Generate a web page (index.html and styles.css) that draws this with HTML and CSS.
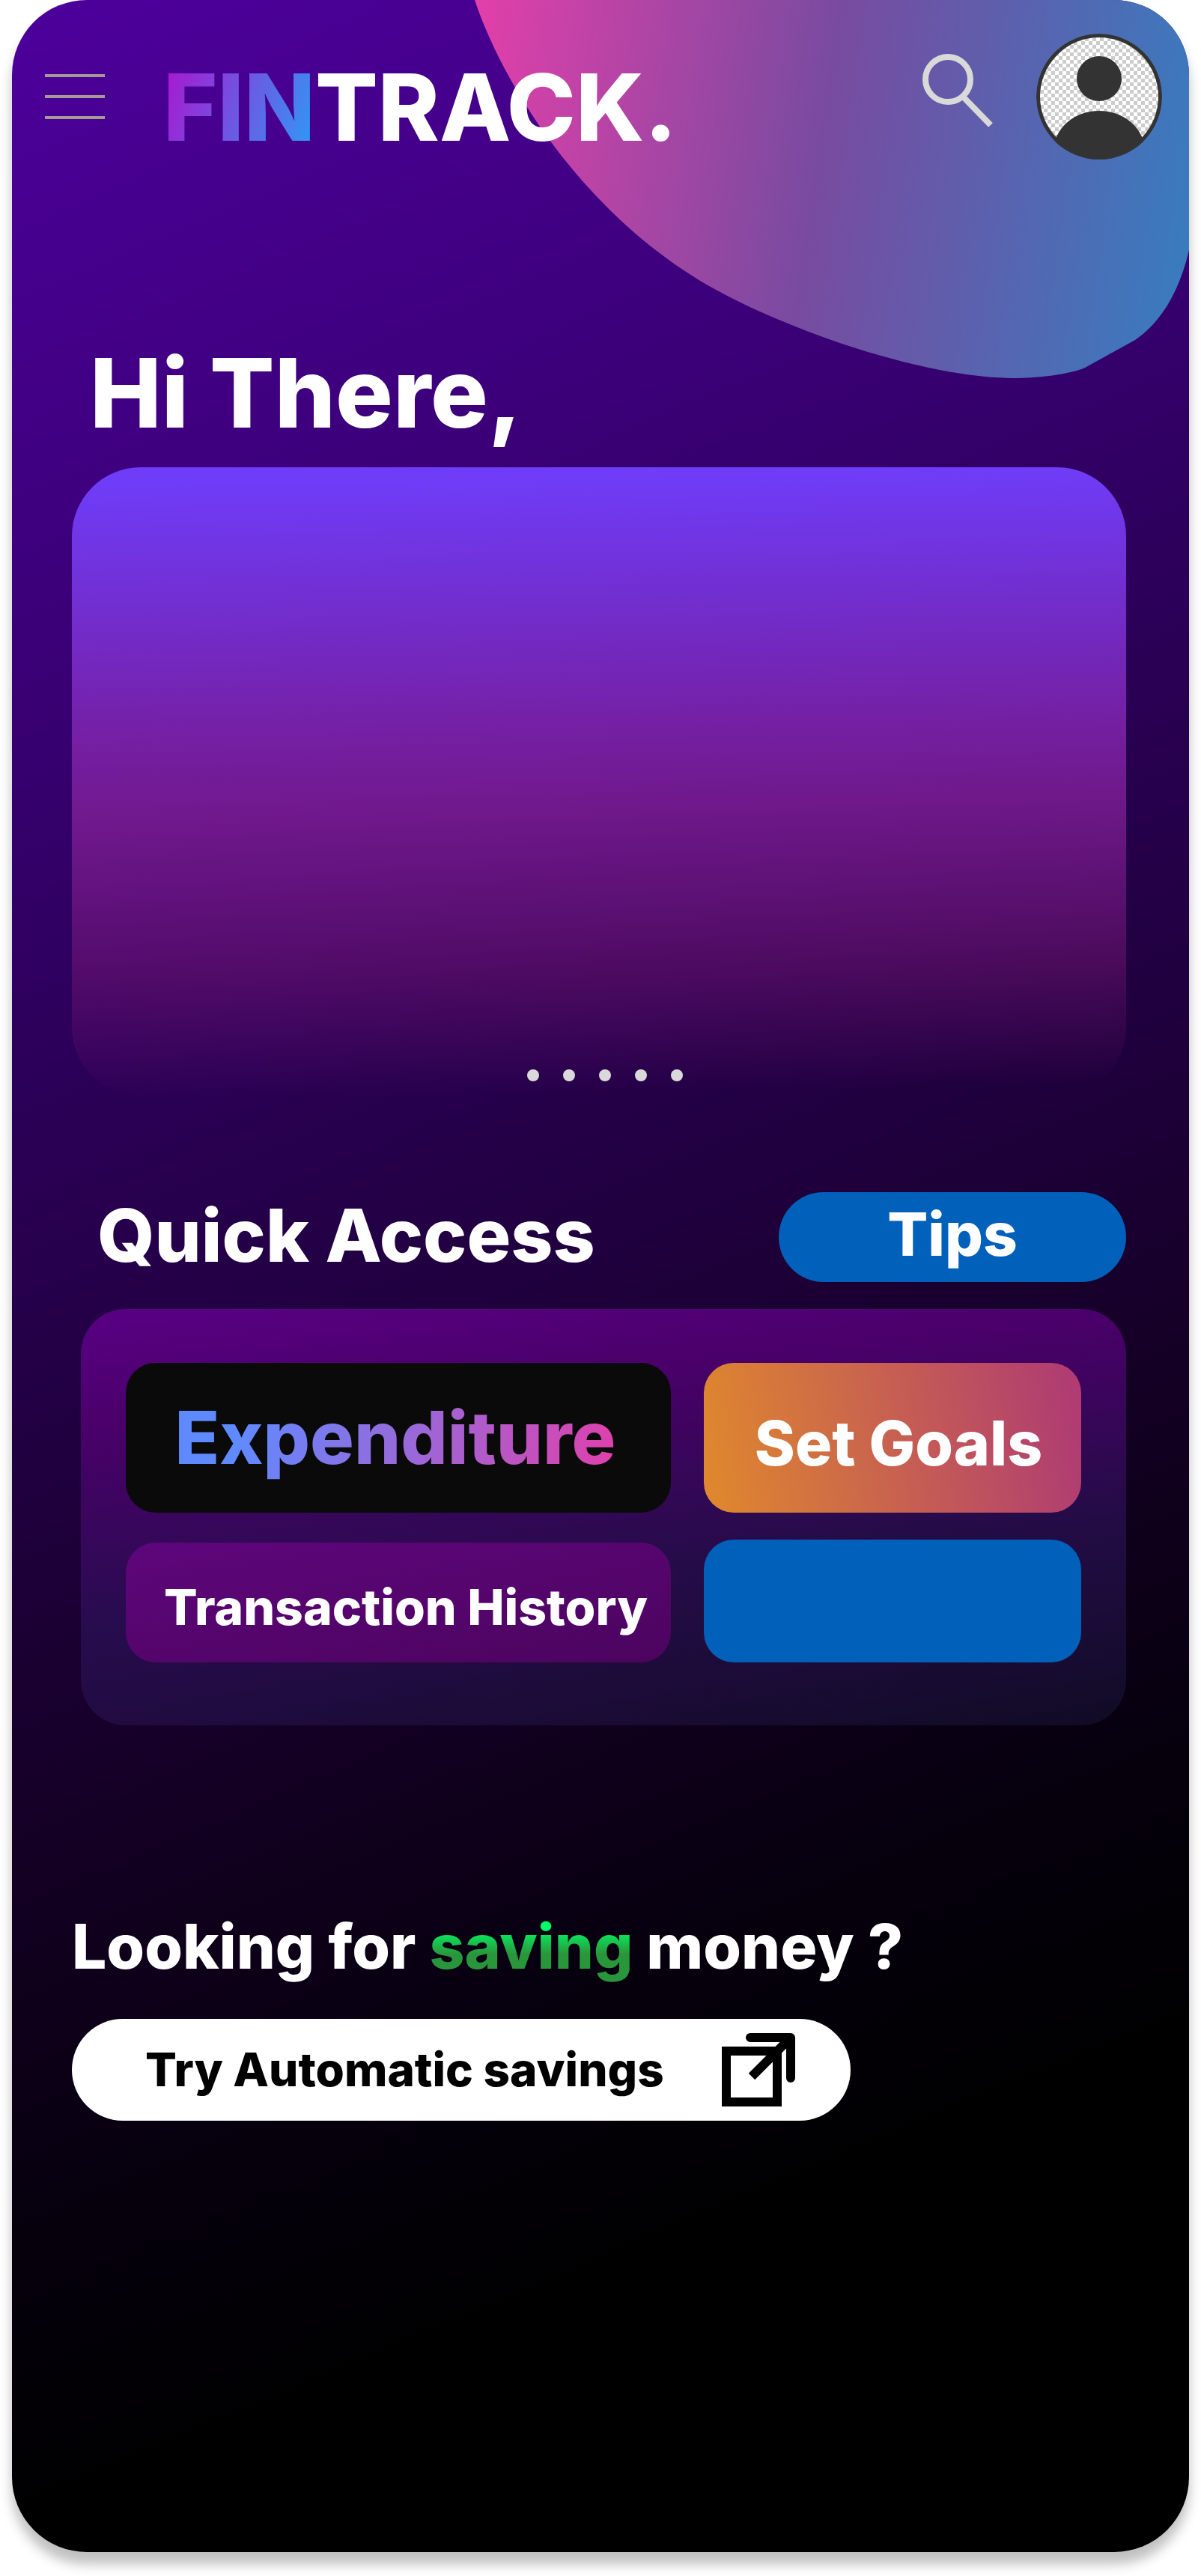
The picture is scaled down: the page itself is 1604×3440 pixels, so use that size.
FILE: index.html
```html
<!DOCTYPE html>
<html lang="en">
<head>
<meta charset="utf-8">
<meta name="viewport" content="width=device-width, initial-scale=1">
<title>Fintrack</title>
<link rel="stylesheet" href="styles.css">
</head>
<body>
<div class="screen">
  <svg class="blob" viewBox="634 0 954 510" aria-hidden="true">
    <defs>
      <linearGradient id="blob-fill" gradientUnits="userSpaceOnUse" x1="490" y1="71" x2="1715" y2="247">
        <stop offset="0" stop-color="#ff3cac"/>
        <stop offset=".5" stop-color="#784ba0"/>
        <stop offset="1" stop-color="#2b86c5"/>
      </linearGradient>
    </defs>
    <path fill="url(#blob-fill)" d="M634 0C672 115 785 295 960 389C1065 446 1240 505 1354 505C1385 505 1428 500 1449 491L1516 454C1552 430 1576 386 1588 334V0Z"/>
  </svg>

  <header class="header">
    <button class="menu" type="button" aria-label="Menu">
      <span class="menu-line"></span>
      <span class="menu-line"></span>
      <span class="menu-line"></span>
    </button>
    <h1 class="logo"><span class="logo-fin">FIN</span>TRACK.</h1>
    <button class="search" type="button" aria-label="Search">
      <svg width="94" height="98" viewBox="0 0 94 98" fill="none" stroke="#d9d9d9" stroke-width="8" aria-hidden="true">
        <circle cx="34" cy="34" r="30"/>
        <path d="M54 57L91 95"/>
      </svg>
    </button>
    <button class="avatar" type="button" aria-label="Profile">
      <svg width="168" height="168" viewBox="0 0 168 168" aria-hidden="true">
        <defs>
          <pattern id="checker" width="10" height="10" patternUnits="userSpaceOnUse">
            <path fill="#fff" d="M0 0h10v10H0z"/>
            <path fill="#ccc" d="M0 0h5v5H0zM5 5h5v5H5z"/>
          </pattern>
          <clipPath id="avatar-clip"><circle cx="84" cy="84" r="84"/></clipPath>
        </defs>
        <g clip-path="url(#avatar-clip)">
          <circle cx="84" cy="84" r="82" fill="url(#checker)"/>
          <circle cx="84" cy="60" r="30" fill="#333"/>
          <ellipse cx="84" cy="157" rx="61" ry="54" fill="#333"/>
          <circle cx="84" cy="84" r="81.500" fill="none" stroke="#333" stroke-width="5"/>
        </g>
      </svg>
    </button>
  </header>

  <main class="main">
    <h2 class="greeting">Hi There,</h2>

    <section class="hero" aria-label="Highlights">
      <span class="dot"></span>
      <span class="dot"></span>
      <span class="dot"></span>
      <span class="dot"></span>
      <span class="dot"></span>
    </section>

    <div class="quick-head">
      <h2 class="quick-title">Quick Access</h2>
      <button class="tips" type="button">Tips</button>
    </div>

    <section class="panel" aria-label="Quick Access">
      <button class="tile tile-expenditure" type="button"><span class="expenditure-text">Expenditure</span></button>
      <button class="tile tile-goals" type="button">Set Goals</button>
      <button class="tile tile-history" type="button">Transaction History</button>
      <button class="tile tile-blank" type="button" aria-label="More"></button>
    </section>

    <h2 class="saving-title">Looking for <span class="saving-word">saving</span> money ?</h2>
    <button class="auto" type="button">
      Try Automatic savings
      <svg width="98" height="98" viewBox="0 0 98 98" fill="none" stroke="#000" stroke-width="12" aria-hidden="true">
        <path d="M6 24H74V92H6Z"/>
        <path d="M40 58L92 6"/>
        <path d="M38 6H92V60" stroke-linecap="round" stroke-linejoin="round"/>
      </svg>
    </button>
  </main>
</div>
</body>
</html>
```
FILE: styles.css
```css
* {
  box-sizing: border-box;
}

body {
  margin: 0;
  padding: 0 16px 32px;
  background: #fff;
  color: #fff;
  font-family: Inter, "Open Sans", sans-serif;
  font-weight: 800;
}

h1,
h2 {
  margin: 0;
  font-weight: 800;
}

button {
  margin: 0;
  padding: 0;
  border: 0;
  background: none;
  color: inherit;
  font: inherit;
  cursor: pointer;
}

svg {
  display: block;
}

.screen {
  position: relative;
  overflow: hidden;
  border-radius: 100px;
  background: linear-gradient(157deg, #4d009c 0%, #3c007a 20%, #2e005e 33%, #1f003c 50%, #130022 62%, #05000c 74%, #000 83%);
  box-shadow: 0 16px 16px rgba(0, 0, 0, 0.25);
}

/* Decorative shape behind the header */
.blob {
  position: absolute;
  top: 0;
  right: 0;
  width: 954px;
  height: 510px;
}

.header {
  position: relative;
  display: flex;
  align-items: center;
  padding: 45px 36px 0 44px;
}

.menu {
  display: grid;
  gap: 24px;
  width: 80px;
}

.menu-line {
  height: 4px;
  background: #a59a98;
}

.logo {
  margin-left: 78px;
  padding-top: 28px;
  font-size: 124px;
  line-height: 124px;
}

.logo-fin {
  background: linear-gradient(110deg, #a818d0 5%, #3198f5 95%);
  background-clip: text;
  color: transparent;
}

.search {
  margin-left: auto;
  padding-bottom: 16px;
}

.avatar {
  margin-left: 58px;
  border-radius: 50%;
}

.main {
  position: relative;
  padding: 250px 84px 576px 80px;
}

.greeting {
  padding-left: 24px;
  font-size: 128px;
  line-height: 124px;
}

.hero {
  display: flex;
  justify-content: center;
  align-items: flex-end;
  gap: 32px;
  height: 840px;
  margin-top: 37px;
  padding: 0 0 20px 16px;
  border-radius: 92px;
  background: linear-gradient(179deg, #6f3cf7 3%, rgba(124, 34, 168, 0.9) 43%, rgba(126, 30, 150, 0.82) 54%, rgba(124, 24, 120, 0.45) 79%, rgba(124, 20, 110, 0) 98%);
}

.dot {
  width: 16px;
  height: 16px;
  border-radius: 50%;
  background: #d9d9d9;
}

.quick-head {
  display: flex;
  justify-content: space-between;
  align-items: center;
  margin-top: 128px;
  padding-left: 34px;
}

.quick-title {
  padding-bottom: 4px;
  font-size: 98px;
  line-height: 96px;
}

.tips {
  width: 464px;
  height: 120px;
  padding-bottom: 8px;
  border-radius: 60px;
  background: #0060ba;
  font-size: 80px;
  line-height: 80px;
}

.panel {
  display: grid;
  grid-template-columns: 13fr 9fr;
  align-items: end;
  gap: 36px 44px;
  margin: 36px 0 0 12px;
  padding: 72px 60px 84px;
  border-radius: 60px;
  background: linear-gradient(174deg, #580082 2%, rgba(76, 0, 108, 0.95) 22%, rgba(48, 20, 96, 0.6) 60%, rgba(34, 36, 80, 0.32) 100%);
}

.tile {
  border-radius: 40px;
}

.tile-expenditure {
  height: 200px;
  padding-right: 8px;
  background: #0a0a0a;
  font-size: 98px;
  line-height: 120px;
}

.expenditure-text {
  background: linear-gradient(100deg, #5f8aff 15%, #e040ab 100%);
  background-clip: text;
  color: transparent;
}

.tile-goals {
  height: 200px;
  padding: 16px 0 0 16px;
  background: linear-gradient(80deg, #e0892c, #b03c72 96%);
  font-size: 82px;
  line-height: 80px;
}

.tile-history {
  height: 160px;
  padding: 12px 0 0 20px;
  background: linear-gradient(170deg, #5e067c, #4c045e);
  font-size: 66px;
  line-height: 80px;
}

.tile-blank {
  height: 164px;
  background: #0060ba;
}

.saving-title {
  margin-top: 256px;
  font-size: 82px;
  line-height: 80px;
}

.saving-word {
  background: linear-gradient(180deg, #00ff66 24%, #2a963c 60%);
  background-clip: text;
  color: transparent;
}

.auto {
  display: flex;
  justify-content: space-between;
  align-items: center;
  width: 1040px;
  max-width: 100%;
  height: 136px;
  margin-top: 56px;
  padding: 0 74px 0 98px;
  border-radius: 68px;
  background: #fff;
  color: #000;
  font-size: 62px;
  line-height: 80px;
}
```
